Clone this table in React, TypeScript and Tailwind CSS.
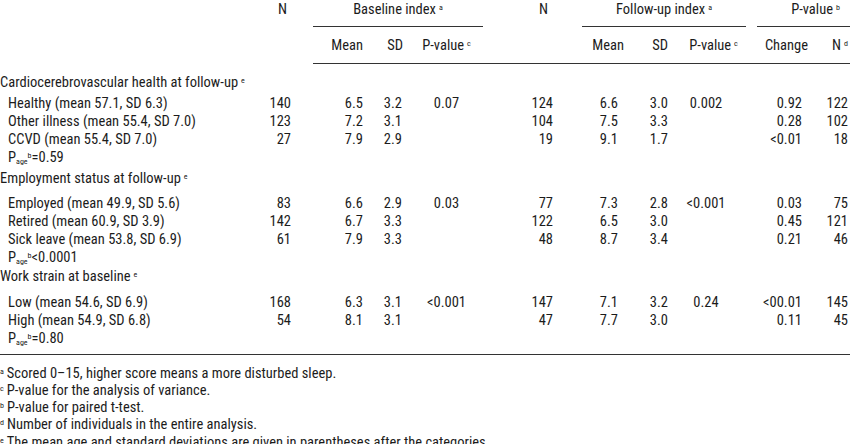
import React from "react";

type Row = {
  label: React.ReactNode;
  n?: string;
  bMean?: string;
  bSd?: string;
  bP?: string;
  fN?: string;
  fMean?: string;
  fSd?: string;
  fP?: string;
  change?: string;
  nd?: string;
  kind: "group" | "data" | "age";
  pt?: string;
};

const Sup = ({ children }: { children: React.ReactNode }) => (
  <sup className="ml-[3px] text-[8px]">{children}</sup>
);

const Page = ({ value }: { value: string }) => (
  <span>
    P<sub className="text-[8px]">age</sub>
    <sup className="text-[8px]">b</sup>
    {value}
  </span>
);

const ROWS: Row[] = [
  {
    kind: "group",
    pt: "pt-[10px]",
    label: (
      <>
        Cardiocerebrovascular health at follow-up<Sup>e</Sup>
      </>
    ),
  },
  { kind: "data", pt: "pt-[3px]", label: "Healthy (mean 57.1, SD 6.3)", n: "140", bMean: "6.5", bSd: "3.2", bP: "0.07", fN: "124", fMean: "6.6", fSd: "3.0", fP: "0.002", change: "0.92", nd: "122" },
  { kind: "data", label: "Other illness (mean 55.4, SD 7.0)", n: "123", bMean: "7.2", bSd: "3.1", fN: "104", fMean: "7.5", fSd: "3.3", change: "0.28", nd: "102" },
  { kind: "data", label: "CCVD (mean 55.4, SD 7.0)", n: "27", bMean: "7.9", bSd: "2.9", fN: "19", fMean: "9.1", fSd: "1.7", change: "<0.01", nd: "18" },
  { kind: "age", label: <Page value="=0.59" /> },
  {
    kind: "group",
    pt: "pt-[3px]",
    label: (
      <>
        Employment status at follow-up<Sup>e</Sup>
      </>
    ),
  },
  { kind: "data", pt: "pt-[7px]", label: "Employed (mean 49.9, SD 5.6)", n: "83", bMean: "6.6", bSd: "2.9", bP: "0.03", fN: "77", fMean: "7.3", fSd: "2.8", fP: "<0.001", change: "0.03", nd: "75" },
  { kind: "data", label: "Retired (mean 60.9, SD 3.9)", n: "142", bMean: "6.7", bSd: "3.3", fN: "122", fMean: "6.5", fSd: "3.0", change: "0.45", nd: "121" },
  { kind: "data", label: "Sick leave (mean 53.8, SD 6.9)", n: "61", bMean: "7.9", bSd: "3.3", fN: "48", fMean: "8.7", fSd: "3.4", change: "0.21", nd: "46" },
  { kind: "age", label: <Page value="<0.0001" /> },
  {
    kind: "group",
    pt: "pt-[1px]",
    label: (
      <>
        Work strain at baseline<Sup>e</Sup>
      </>
    ),
  },
  { kind: "data", pt: "pt-[8px]", label: "Low (mean 54.6, SD 6.9)", n: "168", bMean: "6.3", bSd: "3.1", bP: "<0.001", fN: "147", fMean: "7.1", fSd: "3.2", fP: "0.24", change: "<00.01", nd: "145" },
  { kind: "data", label: "High (mean 54.9, SD 6.8)", n: "54", bMean: "8.1", bSd: "3.1", fN: "47", fMean: "7.7", fSd: "3.0", change: "0.11", nd: "45" },
  { kind: "age", label: <Page value="=0.80" /> },
];

const NOTES: { mark: string; text: string }[] = [
  { mark: "a", text: "Scored 0–15, higher score means a more disturbed sleep." },
  { mark: "c", text: "P-value for the analysis of variance." },
  { mark: "b", text: "P-value for paired t-test." },
  { mark: "d", text: "Number of individuals in the entire analysis." },
  { mark: "e", text: "The mean age and standard deviations are given in parentheses after the categories." },
];

const App = () => {
  return (
    <div className="h-[444px] w-[850px] overflow-hidden bg-white font-['Roboto','Liberation_Sans',sans-serif] text-[14.5px] leading-[18px] font-stretch-condensed text-[#1c1c1c]">
      <table className="w-[850px] table-fixed border-collapse">
        <colgroup>
          <col className="w-[250px]" />
          <col className="w-[63px]" />
          <col className="w-[57px]" />
          <col className="w-[40px]" />
          <col className="w-[73px]" />
          <col className="w-[99px]" />
          <col className="w-[43px]" />
          <col className="w-[50px]" />
          <col className="w-[71px]" />
          <col className="w-[64px]" />
          <col className="w-[40px]" />
        </colgroup>
        <thead>
          <tr className="h-[27px]">
            <th rowSpan={2} className="p-0" />
            <th rowSpan={2} className="p-0 pt-px pr-[26px] text-right align-top font-normal">
              N
            </th>
            <th colSpan={3} className="p-0 align-top font-normal">
              <div className="h-[27px] border-b border-[#333] pt-px text-center">
                Baseline index<Sup>a</Sup>
              </div>
            </th>
            <th rowSpan={2} className="border-b border-[#333] p-0 pt-px pr-[34px] text-right align-top font-normal">
              N
            </th>
            <th colSpan={3} className="p-0 align-top font-normal">
              <div className="h-[27px] border-b border-[#333] pt-px text-center">
                Follow-up index<Sup>a</Sup>
              </div>
            </th>
            <th colSpan={2} className="p-0 align-top font-normal">
              <div className="ml-[11px] h-[27px] border-b border-[#333] pt-px pl-[24px] text-center">
                P-value<Sup>b</Sup>
              </div>
            </th>
          </tr>
          <tr className="h-[36px]">
            <th className="border-b border-[#333] p-0 pt-[10px] pr-[7px] text-right align-top font-normal">Mean</th>
            <th className="border-b border-[#333] p-0 pt-[10px] pr-[7px] text-right align-top font-normal">SD</th>
            <th className="border-b border-[#333] p-0 pt-[10px] text-center align-top font-normal">
              P-value<Sup>c</Sup>
            </th>
            <th className="border-b border-[#333] p-0 pt-[10px] pr-[1px] text-right align-top font-normal">Mean</th>
            <th className="border-b border-[#333] p-0 pt-[10px] pr-[7px] text-right align-top font-normal">SD</th>
            <th className="border-b border-[#333] p-0 pt-[10px] pl-[6px] text-center align-top font-normal">
              P-value<Sup>c</Sup>
            </th>
            <th className="border-b border-[#333] p-0 pt-[10px] pr-[2px] text-right align-top font-normal">Change</th>
            <th className="border-b border-[#333] p-0 pt-[10px] pr-[2px] text-right align-top font-normal">
              N<Sup>d</Sup>
            </th>
          </tr>
        </thead>
        <tbody>
          {ROWS.map((r, i) => {
            const pt = r.pt ?? "";
            const cell = `p-0 align-top ${pt}`;
            if (r.kind === "group") {
              return (
                <tr key={i}>
                  <td colSpan={11} className={`${cell} whitespace-nowrap`}>
                    {r.label}
                  </td>
                </tr>
              );
            }
            return (
              <tr key={i}>
                <td className={`${cell} whitespace-nowrap pl-[8px]`}>{r.label}</td>
                <td className={`${cell} pr-[22px] text-right`}>{r.n}</td>
                <td className={`${cell} pr-[7px] text-right`}>{r.bMean}</td>
                <td className={`${cell} pr-[8px] text-right`}>{r.bSd}</td>
                <td className={`${cell} text-center`}>{r.bP}</td>
                <td className={`${cell} pr-[29px] text-right`}>{r.fN}</td>
                <td className={`${cell} pr-[7px] text-right`}>{r.fMean}</td>
                <td className={`${cell} pr-[7px] text-right`}>{r.fSd}</td>
                <td className={`${cell} pr-[9px] text-center`}>{r.fP}</td>
                <td className={`${cell} pr-[8px] text-right`}>{r.change}</td>
                <td className={`${cell} pr-[2px] text-right`}>{r.nd}</td>
              </tr>
            );
          })}
        </tbody>
      </table>
      <div className="mt-[6px] border-t border-[#333] pt-[10px] leading-[17.3px]">
        {NOTES.map((n) => (
          <div key={n.text} className="whitespace-nowrap">
            <sup className="mr-[3px] text-[8px]">{n.mark}</sup>
            {n.text}
          </div>
        ))}
      </div>
    </div>
  );
};

export default App;
